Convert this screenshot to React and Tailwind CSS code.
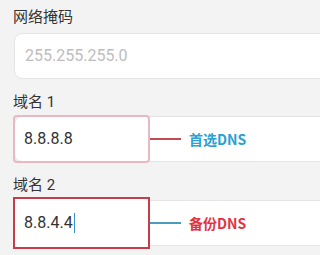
export default function App() {
  return (
    <main className="w-full h-screen overflow-hidden bg-[#f3f3f3] font-['Roboto','Noto_Sans_CJK_SC',sans-serif] text-[#333]">
      <section className="flex flex-col pl-[13px] pt-[7px]">
        <h3 className="text-[15px] leading-[20px]">网络掩码</h3>
        <div className="mt-[6px] ml-px mr-[-20px] h-[46px] flex items-center rounded-lg bg-white border border-[#e4e4e4] pl-[10px] text-[16px] text-[#bdbdbd]">
          255.255.255.0
        </div>

        <h3 className="mt-[13px] text-[15px] leading-[20px]">域名 1</h3>
        <div className="mt-[4px] ml-px mr-[-20px] h-[46px] flex items-center rounded-lg bg-white border border-[#e4e4e4]">
          <div className="-ml-[2px] -my-[2px] self-stretch w-[137px] border-2 border-[#eab8c2] rounded-sm flex items-center pl-[9px] text-[16px]">
            8.8.8.8
          </div>
          <span className="w-[31px] h-[2px] bg-[#c24a55]" />
          <span className="ml-[8px] text-[14px] font-bold text-[#2b9fd2] font-['Noto_Sans_CJK_SC',sans-serif]">首选DNS</span>
        </div>

        <h3 className="mt-[13px] text-[15px] leading-[20px]">域名 2</h3>
        <div className="mt-[5px] ml-px mr-[-20px] h-[46px] flex items-center rounded-lg bg-white border border-[#e4e4e4]">
          <div className="-ml-[2px] -my-[4px] self-stretch w-[137px] border-2 border-[#c83c4a] bg-white flex items-center pl-[9px] text-[16px]">
            8.8.4.4<span className="ml-px w-px h-[20px] bg-[#3a8fc8]" />
          </div>
          <span className="w-[31px] h-[2px] bg-[#4a9cbc]" />
          <span className="ml-[8px] text-[14px] font-bold text-[#e03444] font-['Noto_Sans_CJK_SC',sans-serif]">备份DNS</span>
        </div>
      </section>
    </main>
  );
}
